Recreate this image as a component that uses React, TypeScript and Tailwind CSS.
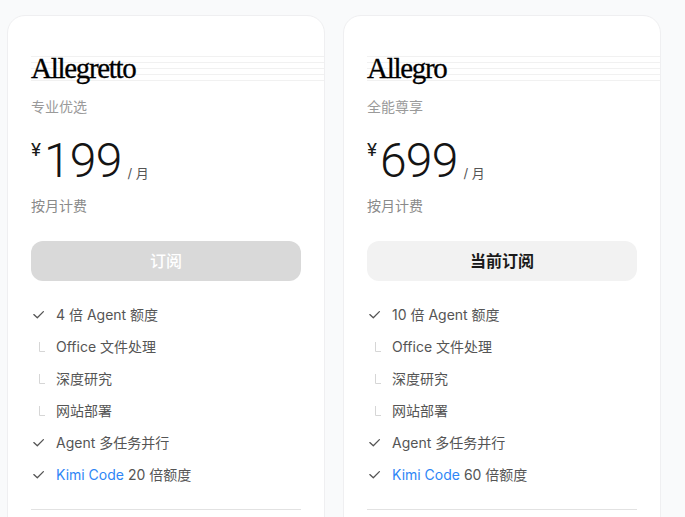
import { ReactNode } from "react";

interface Feature {
  text: ReactNode
  sub?: boolean
}

interface Plan {
  name: string
  tagline: string
  price: string
  billing: string
  cta: string
  current: boolean
  features: Feature[]
}

const plans: Plan[] = [
  {
    name: "Allegretto",
    tagline: "专业优选",
    price: "199",
    billing: "按月计费",
    cta: "订阅",
    current: false,
    features: [
      { text: "4 倍 Agent 额度" },
      { text: "Office 文件处理", sub: true },
      { text: "深度研究", sub: true },
      { text: "网站部署", sub: true },
      { text: "Agent 多任务并行" },
      { text: <><span className="text-[#2f86f6]">Kimi Code</span> 20 倍额度</> }
    ]
  },
  {
    name: "Allegro",
    tagline: "全能尊享",
    price: "699",
    billing: "按月计费",
    cta: "当前订阅",
    current: true,
    features: [
      { text: "10 倍 Agent 额度" },
      { text: "Office 文件处理", sub: true },
      { text: "深度研究", sub: true },
      { text: "网站部署", sub: true },
      { text: "Agent 多任务并行" },
      { text: <><span className="text-[#2f86f6]">Kimi Code</span> 60 倍额度</> }
    ]
  }
];

const CheckIcon = () => (
  <svg viewBox="0 0 16 16" className="w-4 h-4 shrink-0" fill="none" stroke="#555" strokeWidth="1.3" strokeLinecap="round" strokeLinejoin="round">
    <path d="M2.8 7.6 6.3 10.8 12.4 4.6" />
  </svg>
);

const SubIcon = () => (
  <svg viewBox="0 0 16 16" className="w-4 h-4 shrink-0" fill="none" stroke="#d6d6d6" strokeWidth="1">
    <path d="M8.5 3v9.5H14" />
  </svg>
);

const PlanCard = ({ plan }: { plan: Plan }) => (
  <div className="w-[318px] shrink-0 bg-white rounded-[18px] border border-[#efeff1] overflow-hidden px-[23px] pt-[36px] pb-10">
    {/* Title with staff lines */}
    <div className="relative -mr-[23px]">
      <div className="absolute inset-x-0 top-[4px] flex flex-col gap-[5px]">
        <div className="h-px bg-[#f1f1f1]" />
        <div className="h-px bg-[#f1f1f1]" />
        <div className="h-px bg-[#f1f1f1]" />
        <div className="h-px bg-[#f1f1f1]" />
        <div className="h-px bg-[#f1f1f1]" />
      </div>
      <h2 className="relative font-['Liberation_Serif',serif] text-[29px] leading-[32px] tracking-[-1.3px] text-black [-webkit-text-stroke:0.3px_#000]">{plan.name}</h2>
    </div>
    <p className="mt-[13px] text-sm leading-5 text-[#9a9a9a]">{plan.tagline}</p>

    {/* Price */}
    <div className="mt-5 flex items-end font-['Roboto',sans-serif]">
      <span className="self-start mt-[3px] text-[19px] leading-none text-[#1a1a1a]">¥</span>
      <span className="ml-[3px] text-[48px] leading-[48px] font-light tracking-[-0.8px] text-[#141414]">{plan.price}</span>
      <span className="ml-[6px] mb-[2px] text-[13px] leading-5 text-[#555] font-['Inter','Noto_Sans_CJK_SC',sans-serif]">/ 月</span>
    </div>
    <p className="mt-[11px] text-sm leading-5 text-[#8a8a8a]">{plan.billing}</p>

    <button
      className={
        plan.current
          ? "mt-[25px] w-full h-10 rounded-xl bg-[#f2f2f2] text-base font-semibold text-[#1a1a1a]"
          : "mt-[25px] w-full h-10 rounded-xl bg-[#d9d9d9] text-base font-medium text-white"
      }
    >
      {plan.cta}
    </button>

    <ul className="mt-6 flex flex-col gap-3">
      {plan.features.map((feature, index) => (
        <li key={index} className="flex items-center gap-[9px] h-5 text-sm text-[#555]">
          {feature.sub ? <SubIcon /> : <CheckIcon />}
          <span>{feature.text}</span>
        </li>
      ))}
    </ul>

    <div className="mt-6 h-px bg-[#e2e2e2]" />
  </div>
);

const App = () => {
  return (
    <div className="min-h-screen bg-[#f9fafb] pl-[7px] pt-[15px] font-['Inter','Noto_Sans_CJK_SC',sans-serif]">
      <div className="flex gap-[18px]">
        {plans.map((plan) => (
          <PlanCard key={plan.name} plan={plan} />
        ))}
      </div>
    </div>
  );
};

export default App;
